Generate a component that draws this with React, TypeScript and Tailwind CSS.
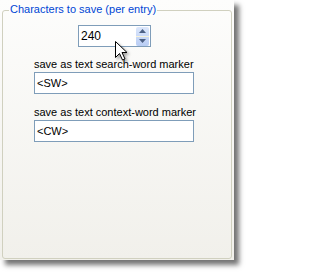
import React from "react";

function Cursor() {
  return (
    <svg width="16" height="22" viewBox="0 0 16 22" className="absolute left-[115px] top-[41px]" style={{ filter: "drop-shadow(2px 2px 1.5px rgba(0,0,0,0.35))" }}>
      <path d="M0.5 0.5 L0.5 16.5 L4.5 12.5 L7.5 19 L10 18 L7 11.5 L12 11.5 Z" fill="#fff" stroke="#000" strokeWidth="1" strokeLinejoin="miter" />
    </svg>
  );
}

function SpinBox({ value }: { value: string }) {
  return (
    <div className="flex items-center w-[73px] h-[22px] border border-[#7f9db9] bg-white pl-[2px] pr-[1px]">
      <span className="flex-1 text-[12px] leading-none text-black">{value}</span>
      <div className="flex flex-col w-[13px] h-[19px] rounded-[2px] overflow-hidden bg-gradient-to-b from-[#dce7fb] to-[#b9cdf4]">
        <div className="flex-1 flex items-center justify-center border-b border-[#f7f2d8]">
          <svg width="7" height="4" viewBox="0 0 7 4"><path d="M0 4 L3.5 0 L7 4 Z" fill="#4d6185" /></svg>
        </div>
        <div className="flex-1 flex items-center justify-center">
          <svg width="7" height="4" viewBox="0 0 7 4"><path d="M0 0 L3.5 4 L7 0 Z" fill="#4d6185" /></svg>
        </div>
      </div>
    </div>
  );
}

function Field({ label, value, top }: { label: string; value: string; top: string }) {
  return (
    <div className={`flex flex-col ${top}`}>
      <span className="text-[11px] leading-[13px] text-black">{label}</span>
      <div className="mt-[1px] w-[160px] h-[22px] border border-[#7f9db9] bg-white flex items-center pl-[2px]">
        <span className="text-[11px] leading-none text-black">{value}</span>
      </div>
    </div>
  );
}

export default function App() {
  return (
    <div className="w-[247px] h-[273px] bg-white" style={{ fontFamily: '"Liberation Sans", Arial, sans-serif' }}>
      <div className="relative w-[234px] h-[260px] bg-gradient-to-b from-[#fdfdfc] to-[#f1f0eb] pt-[10px] pl-[2px] shadow-[5px_5px_5px_rgba(0,0,0,0.55)]">
        <div className="relative w-[230px] h-[249px] border border-[#d0d0bf] rounded-[3px] pl-[31px]">
          <span className="absolute -top-[8px] left-[6px] px-[1px] bg-[#fdfdfc] text-[11px] leading-[13px] text-[#0046d5]">
            Characters to save (per entry)
          </span>
          <div className="pt-[14px] pl-[44px]">
            <SpinBox value="240" />
          </div>
          <Field label="save as text search-word marker" value="<SW>" top="mt-[11px]" />
          <Field label="save as text context-word marker" value="<CW>" top="mt-[12px]" />
        </div>
        <Cursor />
      </div>
    </div>
  );
}
